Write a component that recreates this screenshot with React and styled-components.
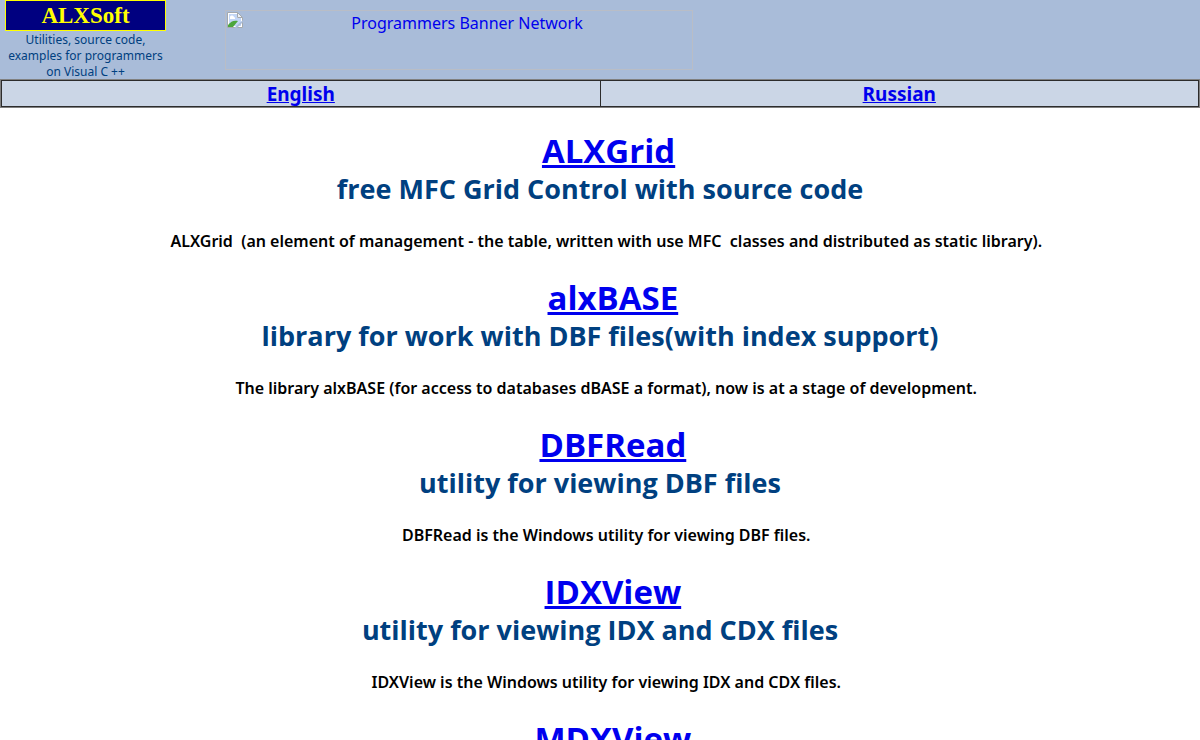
import React from 'react';
import styled, { createGlobalStyle } from 'styled-components';

const GlobalStyle = createGlobalStyle`
  body {
    margin: 0;
    background-color: #ffffff;
    color: #000000;
    font-family: 'Noto Sans', 'Open Sans', sans-serif;
  }

  a {
    color: #0000ee;
  }
`;

const Header = styled.header`
  display: flex;
  align-items: flex-start;
  height: 79px;
  background-color: #a9bcd9;
`;

const Brand = styled.div`
  width: 161px;
  margin-left: 5px;
  text-align: center;
`;

const Logo = styled.h1`
  margin: 0;
  border: 1px solid #ffff00;
  background-color: #000080;
  color: #ffff00;
  font-family: 'Liberation Serif', serif;
  font-size: 23px;
  line-height: 29px;
`;

const Tagline = styled.p`
  margin: 1px 0 0;
  color: #004080;
  font-size: 12px;
  line-height: 16px;
`;

const Banner = styled.a`
  display: flex;
  box-sizing: border-box;
  width: 468px;
  height: 60px;
  margin: 10px 0 0 59px;
  padding: 1px;
  border: 1px solid #b9bdc6;
  text-decoration: none;
`;

const BannerText = styled.span`
  flex: 1;
  font-size: 16px;
  line-height: 22px;
  text-align: center;
`;

const Languages = styled.nav`
  display: flex;
  border: 1px solid #808080;
`;

const Language = styled.div`
  flex: 1;
  padding-top: 1px;
  border: 1px solid #2c2c2c;
  background-color: #cbd6e6;
  font-size: 19px;
  font-weight: bold;
  line-height: 24px;
  text-align: center;

  & + & {
    border-left: none;
  }
`;

const Main = styled.main`
  padding-top: 21px;
  text-align: center;
`;

const Product = styled.section`
  padding-bottom: 25px;
`;

const Name = styled.h2`
  margin: 0;
  font-family: 'Open Sans', 'Noto Sans', sans-serif;
  font-size: 33px;
  line-height: 44px;
`;

const Summary = styled.h3`
  margin: 0 0 26px;
  color: #004080;
  font-family: 'Open Sans', 'Noto Sans', sans-serif;
  font-size: 27px;
  line-height: 32px;
`;

const Description = styled.p`
  margin: 0;
  font-size: 16px;
  font-weight: 600;
  line-height: 20px;
`;

const products = [
  {
    name: 'ALXGrid',
    indent: '\u00a0\u00a0',
    summary: 'free MFC Grid Control with source code',
    description:
      'ALXGrid\u00a0 (an element of management - the table, written with use MFC\u00a0 classes and distributed as static library).',
  },
  {
    name: 'alxBASE',
    indent: '\u00a0\u00a0\u00a0',
    summary: 'library for work with DBF files(with index support)',
    description:
      'The library alxBASE (for access to databases dBASE a format), now is at a stage of development.',
  },
  {
    name: 'DBFRead',
    indent: '\u00a0\u00a0\u00a0',
    summary: 'utility for viewing DBF files',
    description: 'DBFRead is the Windows utility for viewing DBF files.',
  },
  {
    name: 'IDXView',
    indent: '\u00a0\u00a0\u00a0',
    summary: 'utility for viewing IDX and CDX files',
    description: 'IDXView is the Windows utility for viewing IDX and CDX files.',
  },
  {
    name: 'MDXView',
    indent: '\u00a0\u00a0\u00a0',
  },
];

const BrokenImage = () => (
  <svg width="16" height="16" viewBox="0 0 16 16" aria-hidden="true">
    <path d="M0.5 0.5h10l5 5v10h-15z" fill="#ffffff" stroke="#a5a9ad" />
    <path d="M2 2h8v4h4v8h-12z" fill="#c3d6f5" />
    <path d="M3 6a2 2 0 0 1 4-1a1.500 1.500 0 0 1 1 2h-5z" fill="#ffffff" />
    <path d="M1 15v-2c3-4 6-5 10-4l-5 6z" fill="#4ca63c" />
    <path d="M7 16l9-8v2l-6 6z" fill="#a9bcd9" />
    <path d="M10.500 0.500v5h5z" fill="#eef1f5" stroke="#a5a9ad" />
  </svg>
);

const App = () => {
  return (
    <>
      <GlobalStyle />
      <Header>
        <Brand>
          <Logo>ALXSoft</Logo>
          <Tagline>
            Utilities, source code,
            <br />
            examples for programmers
            <br />
            on Visual C ++
          </Tagline>
        </Brand>
        <Banner href="#banner">
          <BrokenImage />
          <BannerText>Programmers Banner Network</BannerText>
        </Banner>
      </Header>
      <Languages>
        <Language>
          <a href="#english">English</a>
        </Language>
        <Language>
          <a href="#russian">Russian</a>
        </Language>
      </Languages>
      <Main>
        {products.map(({ name, indent, summary, description }) => (
          <Product key={name}>
            <Name>
              {indent}
              <a href={`#${name}`}>{name}</a>
            </Name>
            {summary && <Summary>{summary}</Summary>}
            {description && (
              <Description>
                {'\u00a0\u00a0\u00a0'}
                {description}
              </Description>
            )}
          </Product>
        ))}
      </Main>
    </>
  );
};

export default App;
